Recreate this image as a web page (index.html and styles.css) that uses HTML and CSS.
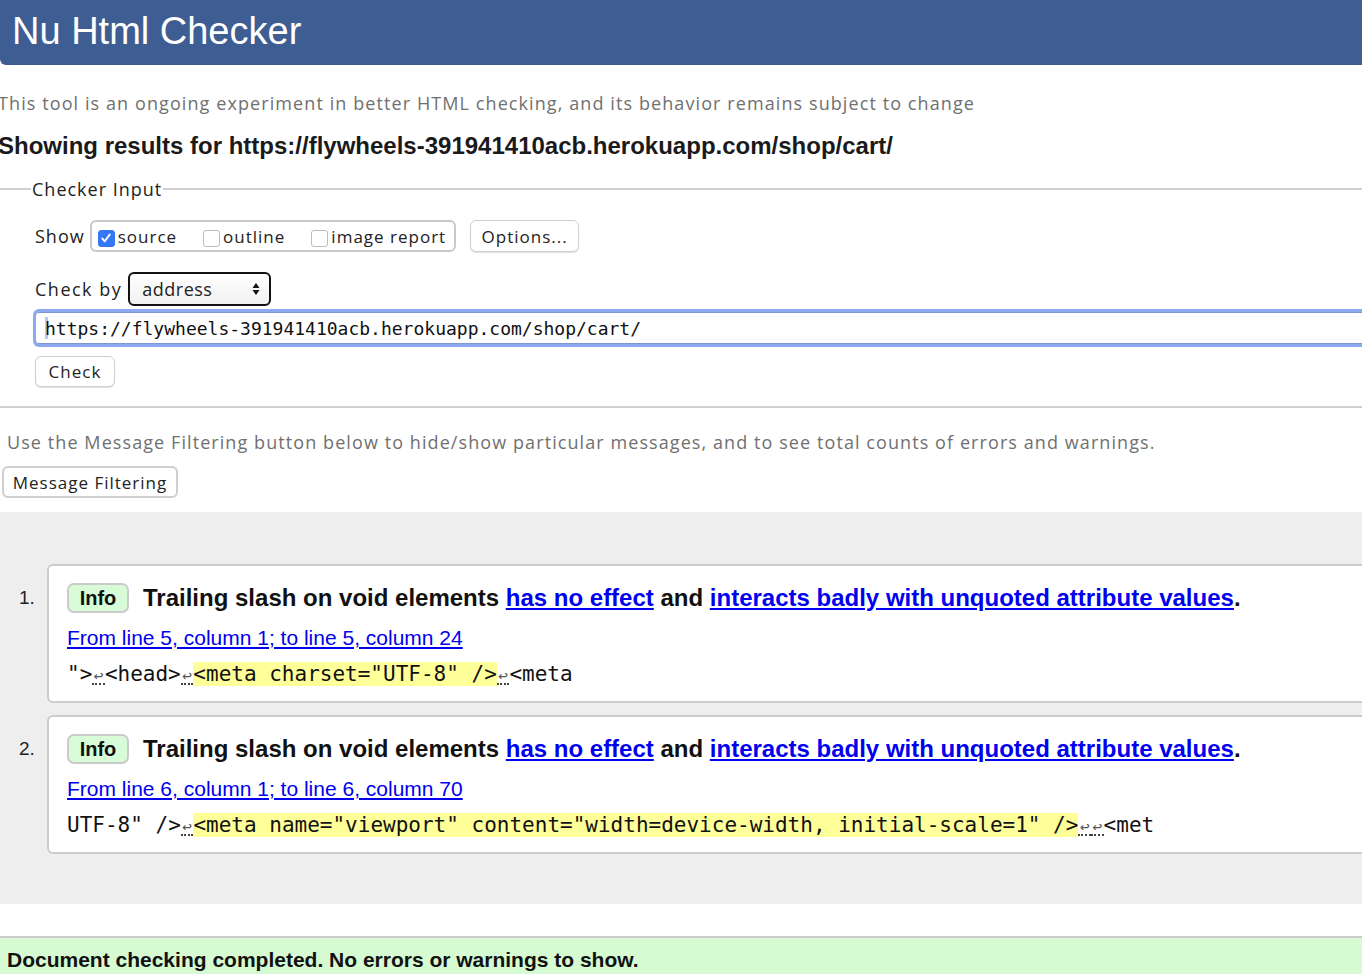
FILE: index.html
```html
<!DOCTYPE html>
<html lang="en">
<head>
<meta charset="utf-8">
<title>Nu Html Checker</title>
<link rel="stylesheet" href="styles.css">
</head>
<body>
<header class="top"><h1 class="title">Nu Html Checker</h1></header>
<p class="intro">This tool is an ongoing experiment in better HTML checking, and its behavior remains subject to change</p>
<p class="showing">Showing results for https://flywheels-391941410acb.herokuapp.com/shop/cart/</p>

<fieldset class="checker">
  <legend class="legend">Checker Input</legend>
  <div class="row row-show">
    <span class="label">Show</span>
    <span class="showbox">
      <span class="opt"><span class="cb cb-on"><svg width="14" height="14" viewBox="0 0 14 14"><path d="M3.2 7.4l2.5 3L10.8 3.4" fill="none" stroke="#fff" stroke-width="1.8" stroke-linecap="round" stroke-linejoin="round"/></svg></span>source</span>
      <span class="opt"><span class="cb"></span>outline</span>
      <span class="opt"><span class="cb"></span>image report</span>
    </span>
    <span class="btn btn-options">Options...</span>
  </div>
  <div class="row row-by">
    <span class="label label-by">Check by</span>
    <span class="select">address<svg class="arrows" width="8" height="14" viewBox="0 0 8 14"><path d="M4 1L7.5 6H0.5Z M4 13L7.5 8H0.5Z" fill="#111"/></svg></span>
  </div>
  <div class="url"><span class="caret"></span>https://flywheels-391941410acb.herokuapp.com/shop/cart/</div>
  <span class="btn btn-check">Check</span>
</fieldset>

<p class="note">Use the Message Filtering button below to hide/show particular messages, and to see total counts of errors and warnings.</p>
<span class="btn btn-filter">Message Filtering</span>

<section class="results">
  <ol class="msgs">
    <li class="msg">
      <span class="num">1.</span>
      <div class="box">
        <p class="head"><span class="badge">Info</span><span class="text">Trailing slash on void elements <a href="#">has no effect</a> and <a href="#">interacts badly with unquoted attribute values</a>.</span></p>
        <p class="loc"><a href="#">From line 5, column 1; to line 5, column 24</a></p>
        <p class="code">"&gt;<span class="lf">↩</span>&lt;head&gt;<span class="lf">↩</span><mark>&lt;meta charset="UTF-8" /&gt;</mark><span class="lf">↩</span>&lt;meta</p>
      </div>
    </li>
    <li class="msg">
      <span class="num">2.</span>
      <div class="box">
        <p class="head"><span class="badge">Info</span><span class="text">Trailing slash on void elements <a href="#">has no effect</a> and <a href="#">interacts badly with unquoted attribute values</a>.</span></p>
        <p class="loc"><a href="#">From line 6, column 1; to line 6, column 70</a></p>
        <p class="code">UTF-8" /&gt;<span class="lf">↩</span><mark>&lt;meta name="viewport" content="width=device-width, initial-scale=1" /&gt;</mark><span class="lf">↩</span><span class="lf">↩</span>&lt;met</p>
      </div>
    </li>
  </ol>
</section>

<div class="done">Document checking completed. No errors or warnings to show.</div>
</body>
</html>
```
FILE: styles.css
```css
html, body {
  margin: 0;
  padding: 0;
  background: #fff;
  overflow: hidden;
}
body {
  font-family: "Liberation Sans", Arial, sans-serif;
  color: #111;
  width: 1362px;
}
p { margin: 0; }

.top {
  background: #3e5e93;
  height: 65px;
  border-bottom-left-radius: 6px;
  display: flex;
  align-items: center;
}
.title {
  margin: -4px 0 0 12px;
  color: #fff;
  font-weight: normal;
  font-size: 38px;
  line-height: 1;
}

.intro {
  margin: 27px 0 0 -2px;
  font-family: "Open Sans", sans-serif;
  font-size: 18px;
  line-height: 22px;
  color: #707070;
  letter-spacing: 1.09px;
}
.showing {
  margin: 19px 0 0 -2px;
  font-size: 24px;
  line-height: 26px;
  font-weight: bold;
  color: #1a1a1a;
}

.checker {
  margin: 18px -20px 0 -4px;
  padding: 0 0 19px 39px;
  border: 2px solid #d0d0d0;
  border-left-width: 0;
  font-family: "Open Sans", sans-serif;
  font-size: 18px;
  letter-spacing: 1px;
}
.legend {
  padding: 0 1px;
  margin-left: -4px;
  font-size: 18px;
  color: #222;
}
.row {
  display: flex;
  align-items: center;
  color: #222;
}
.row-show { margin-top: 19px; height: 32px; }
.row-by { margin-top: 20px; height: 34px; }
.label { margin-right: 5px; }
.label-by { margin-right: 6px; letter-spacing: 1.5px; }
.showbox {
  display: flex;
  align-items: center;
  gap: 26px;
  height: 28px;
  padding: 0 8px 0 6px;
  border: 2px solid #c8c8c8;
  border-radius: 6px;
  font-size: 17px;
}
.opt { display: flex; align-items: center; }
.cb {
  width: 17px;
  height: 17px;
  border: 1px solid #bdbdbd;
  border-radius: 3px;
  margin: 4px 3px 0 0;
  box-sizing: border-box;
  display: flex;
  align-items: center;
  justify-content: center;
  background: #fff;
}
.cb-on { background: #3478f6; border-color: #3478f6; }

.btn {
  display: inline-flex;
  align-items: center;
  justify-content: center;
  box-sizing: border-box;
  border: 1px solid #cfcfcf;
  border-radius: 6px;
  background: #fff;
  box-shadow: 0 1px 1px rgba(0,0,0,0.12);
  color: #222;
  font-family: "Open Sans", sans-serif;
  font-size: 17px;
  letter-spacing: 1px;
}
.btn-options { margin-left: 14px; width: 109px; height: 32px; }

.select {
  box-sizing: border-box;
  width: 143px;
  height: 34px;
  border: 2px solid #111;
  border-radius: 6px;
  display: flex;
  align-items: center;
  justify-content: space-between;
  padding: 0 9px 0 12px;
  background: linear-gradient(#fff, #f1f1f1);
  font-size: 18px;
  letter-spacing: 0.5px;
}

.url {
  box-sizing: border-box;
  margin: 3px 0 0 -2px;
  height: 38px;
  border: 3px solid #8daaf0;
  border-right: 0;
  border-radius: 6px 0 0 6px;
  box-shadow: inset 0 1px 0 #7d96d6, inset 0 -1px 0 #7d96d6;
  display: flex;
  align-items: center;
  padding-left: 9px;
  font-family: "DejaVu Sans Mono", monospace;
  font-size: 18px;
  letter-spacing: 0;
  color: #111;
}
.caret {
  width: 3px;
  height: 22px;
  background: #b7c8f5;
  margin-right: -3px;
}
.btn-check { margin: 9px 0 0 0; width: 80px; height: 31px; }

.note {
  margin: 23px 0 0 7px;
  font-family: "Open Sans", sans-serif;
  font-size: 18px;
  line-height: 22px;
  color: #707070;
  letter-spacing: 1.08px;
}
.btn-filter {
  margin: 13px 0 0 2px;
  width: 176px;
  height: 32px;
  border: 2px solid #cfcfcf;
  box-shadow: none;
}

.results {
  margin-top: 14px;
  background: #eeeeee;
  padding: 52px 0 50px;
}
.msgs {
  list-style: none;
  margin: 0;
  padding: 0;
  display: flex;
  flex-direction: column;
  gap: 12px;
}
.msg { display: flex; align-items: flex-start; }
.num {
  width: 47px;
  box-sizing: border-box;
  padding: 23px 0 0 19px;
  font-size: 19px;
  color: #222;
}
.box {
  flex: 1;
  margin-right: -20px;
  background: #fff;
  border: 2px solid #cccccc;
  border-radius: 6px;
  padding: 17px 18px 14px 18px;
}
.head {
  display: flex;
  align-items: center;
  height: 30px;
}
.badge {
  box-sizing: border-box;
  width: 62px;
  height: 30px;
  background: #d8fcd8;
  border: 2px solid #cbcbcb;
  border-radius: 7px;
  display: flex;
  align-items: center;
  justify-content: center;
  font-weight: bold;
  font-size: 20px;
  color: #111;
  margin-right: 14px;
}
.text {
  font-weight: bold;
  font-size: 24px;
  color: #111;
  white-space: nowrap;
}
.text a, .loc a { color: #0000ee; }
.loc {
  margin-top: 12px;
  font-size: 21px;
  line-height: 26px;
  white-space: nowrap;
}
.code {
  margin-top: 10px;
  font-family: "DejaVu Sans Mono", monospace;
  font-size: 21px;
  line-height: 26px;
  color: #111;
  white-space: pre;
}
.code mark { background: #ffff9a; color: #111; }
.lf {
  display: inline-block;
  width: 12.6px;
  text-align: center;
  font-size: 16px;
  color: #555;
  border-bottom: 2px dotted #444;
  line-height: 15px;
}

.done {
  margin-top: 32px;
  background: #d6fbd2;
  border-top: 2px solid #cccccc;
  height: 40px;
  padding: 10px 0 0 7px;
  font-size: 21px;
  font-weight: bold;
  color: #111;
}
```
